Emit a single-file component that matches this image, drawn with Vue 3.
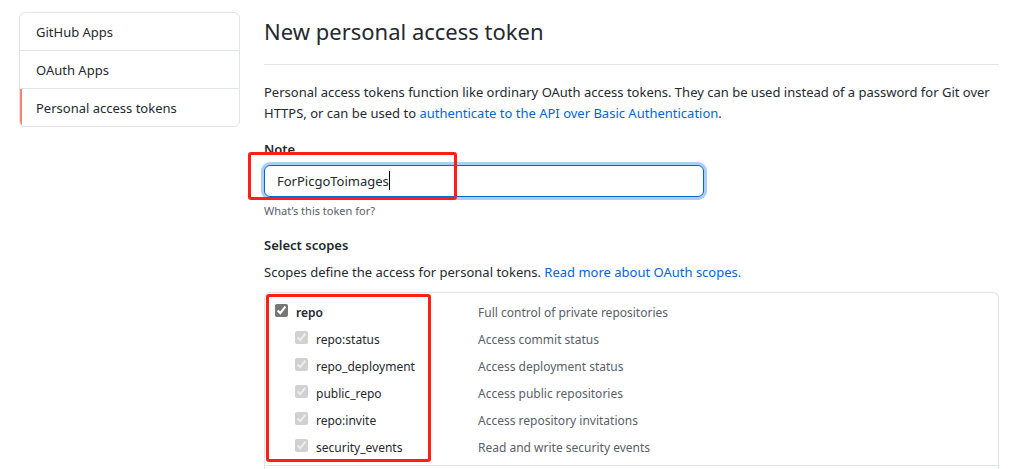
<script setup>
import { ref } from 'vue'

const menu = ['GitHub Apps', 'OAuth Apps', 'Personal access tokens']
const note = ref('ForPicgoToimages')
const scopes = [
  { name: 'repo', text: 'Full control of private repositories', parent: true },
  { name: 'repo:status', text: 'Access commit status' },
  { name: 'repo_deployment', text: 'Access deployment status' },
  { name: 'public_repo', text: 'Access public repositories' },
  { name: 'repo:invite', text: 'Access repository invitations' },
  { name: 'security_events', text: 'Read and write security events' },
]
</script>

<template>
  <div class="page">
    <nav class="menu" aria-label="Developer settings">
      <a
        v-for="(item, i) in menu"
        :key="item"
        href="#"
        class="menu-item"
        :class="{ selected: i === 2 }"
      >{{ item }}</a>
    </nav>

    <main class="content">
      <h1>New personal access token</h1>
      <p class="intro">
        Personal access tokens function like ordinary OAuth access tokens. They can be used
        instead of a password for Git over HTTPS, or can be used to
        <a href="#">authenticate to the API over Basic Authentication</a>.
      </p>

      <form @submit.prevent>
        <label class="title" for="note">Note</label>
        <div class="field">
          <input id="note" v-model="note" class="note" type="text" spellcheck="false" />
          <span class="caret"></span>
          <span class="mark mark-note"></span>
        </div>
        <p class="hint">What’s this token for?</p>

        <h2 class="title scopes-title">Select scopes</h2>
        <p class="scopes-intro">
          Scopes define the access for personal tokens.
          <a href="#">Read more about OAuth scopes.</a>
        </p>

        <div class="scopes">
          <ul class="group">
            <li v-for="s in scopes" :key="s.name" class="scope" :class="{ parent: s.parent }">
              <label class="scope-name">
                <input type="checkbox" checked :disabled="!s.parent" />
                <span>{{ s.name }}</span>
              </label>
              <span class="scope-text">{{ s.text }}</span>
            </li>
          </ul>
          <span class="mark mark-scopes"></span>
        </div>
      </form>
    </main>
  </div>
</template>

<style>
body {
  background: #fff;
}
</style>

<style scoped>
* {
  box-sizing: border-box;
}

.page {
  display: flex;
  align-items: flex-start;
  gap: 24px;
  padding: 12px 23px 0 19px;
  font-family: "Noto Sans", "Open Sans", sans-serif;
  font-size: 13px;
  line-height: 21px;
  color: #24292e;
}

a {
  color: #0366d6;
  text-decoration: none;
}

.menu {
  flex: 0 0 221px;
  border: 1px solid #e1e4e8;
  border-radius: 6px;
  overflow: hidden;
}

.menu-item {
  display: block;
  padding: 9px 16px 7px;
  color: #24292e;
  border-bottom: 1px solid #e1e4e8;
}

.menu-item:last-child {
  border-bottom: 0;
}

.menu-item.selected {
  box-shadow: inset 2px 0 0 #f9826c;
}

.content {
  flex: 1;
  min-width: 0;
}

h1 {
  margin: 0 0 17px;
  padding: 1px 0 15px;
  font-size: 22px;
  line-height: 36px;
  font-weight: 400;
  border-bottom: 1px solid #e1e4e8;
}

p {
  margin: 0;
}

.intro {
  margin-bottom: 15px;
}

.title {
  display: block;
  margin: 0;
  font-size: 13px;
  line-height: 21px;
  font-weight: 600;
}

.field {
  position: relative;
  margin-top: 5px;
}

.note {
  display: block;
  width: 440px;
  max-width: 100%;
  height: 32px;
  padding: 4px 12px;
  font: inherit;
  color: inherit;
  background: #fff;
  border: 1px solid #0366d6;
  border-radius: 6px;
  outline: 0;
  box-shadow: 0 0 0 3px #a9cff2;
}

.caret {
  position: absolute;
  top: 6px;
  left: 125px;
  width: 1px;
  height: 19px;
  background: #000;
}

.mark {
  position: absolute;
  border: 3px solid #ff1f14;
  border-radius: 3px;
  pointer-events: none;
}

.mark-note {
  top: -13px;
  left: -16px;
  width: 209px;
  height: 48px;
}

.mark-scopes {
  top: 1px;
  left: 1px;
  width: 165px;
  height: 168px;
}

.hint {
  margin-top: 5px;
  font-size: 11px;
  line-height: 18px;
  color: #586069;
}

.scopes-title {
  margin-top: 15px;
}

.scopes-intro {
  margin: 6px 0 9px;
}

.scopes {
  position: relative;
  padding-bottom: 3px;
  border: 1px solid #e1e4e8;
  border-bottom: 0;
  border-radius: 6px 6px 0 0;
}

.group {
  margin: 0;
  padding: 6px 10px 4px;
  list-style: none;
  border-bottom: 1px solid #e1e4e8;
}

.scope {
  display: flex;
  align-items: center;
  height: 27px;
  font-size: 12px;
}

.scope-name {
  display: flex;
  align-items: center;
  gap: 8px;
  flex: 0 0 203px;
  padding-left: 20px;
}

.parent .scope-name {
  padding-left: 0;
  font-weight: 600;
}

.scope-name input {
  width: 13px;
  height: 13px;
  margin: 0 0 4px;
  accent-color: #767676;
}

.scope-text {
  color: #586069;
}
</style>
